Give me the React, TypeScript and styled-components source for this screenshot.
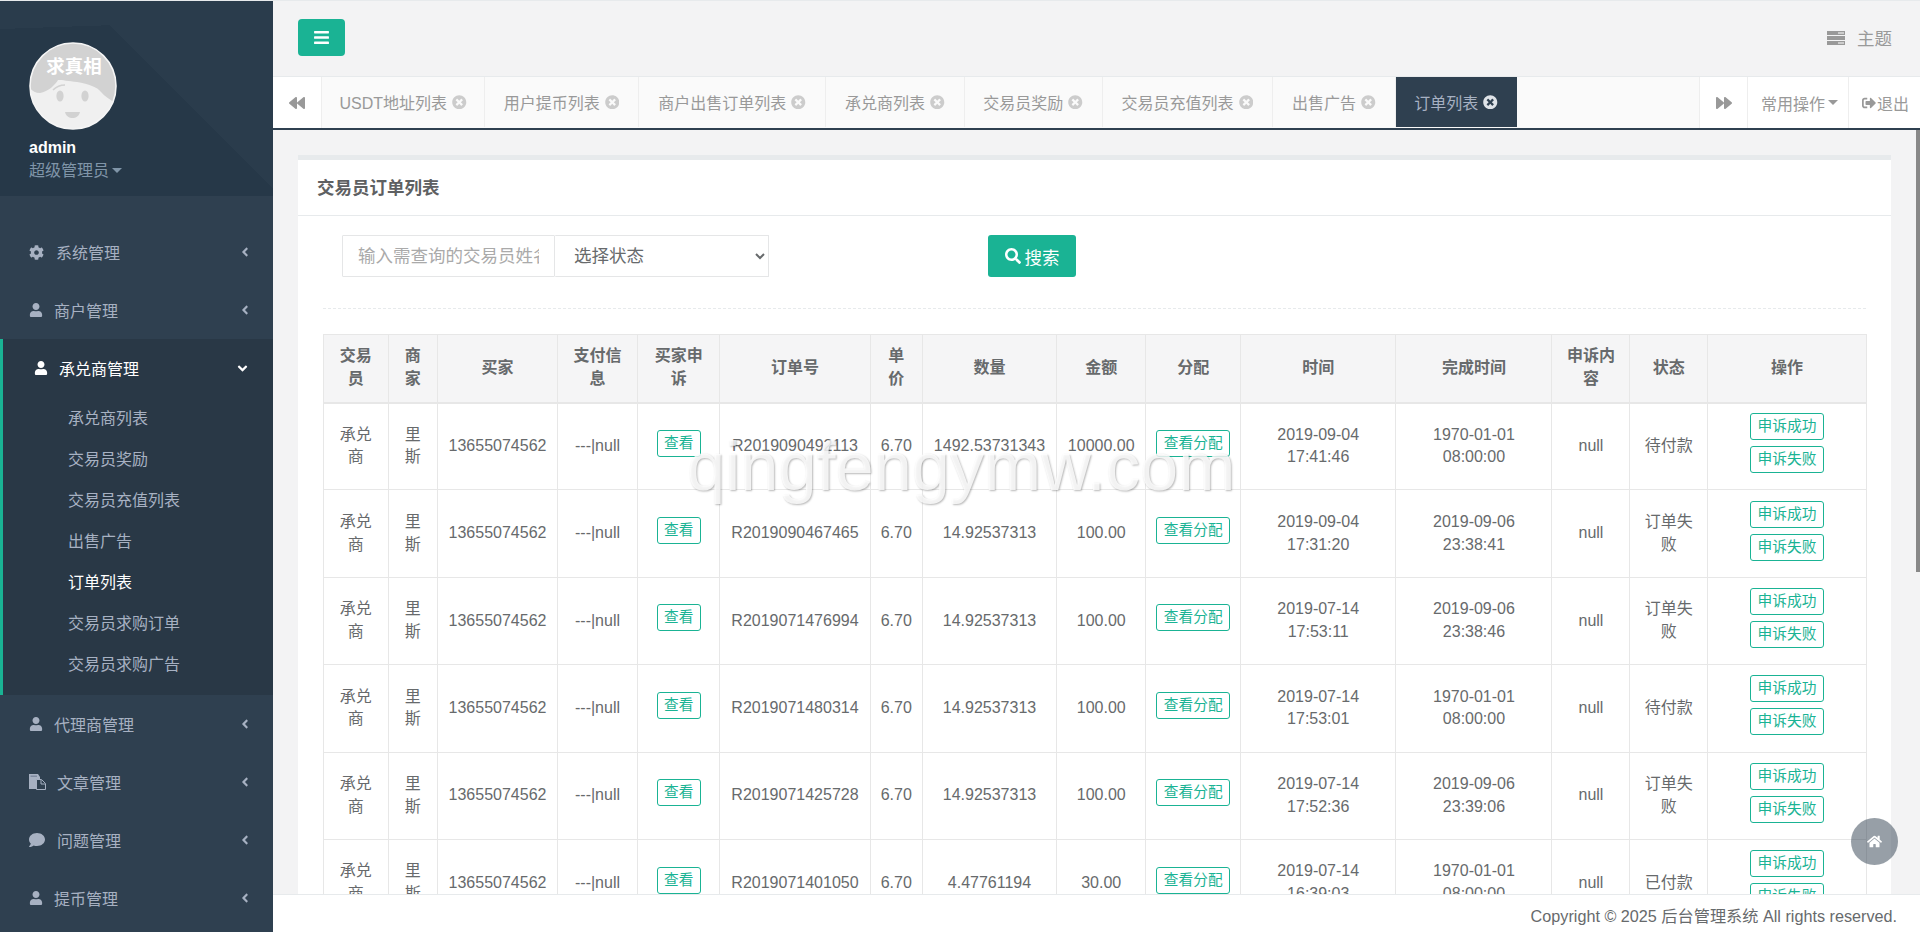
import React from "react";
import styled, { createGlobalStyle } from "styled-components";
import {
  FaAngleDown,
  FaAngleLeft,
  FaBackward,
  FaBars,
  FaCog,
  FaComment,
  FaForward,
  FaHome,
  FaSearch,
  FaSignOutAlt,
  FaTimesCircle,
  FaUser,
} from "react-icons/fa";

const FONT = `"Liberation Sans", "Noto Sans CJK SC", sans-serif`;

const GlobalStyle = createGlobalStyle`
  html, body {
    margin: 0;
    padding: 0;
    height: 100%;
    overflow: hidden;
    background: #f3f3f4;
    font-family: ${FONT};
    color: #676a6c;
  }
  * {
    box-sizing: border-box;
  }
`;

const Page = styled.div`
  position: relative;
  display: flex;
  width: 1920px;
  height: 932px;
  overflow: hidden;
  border-top: 1px solid #e7eaec;
`;

const Sidebar = styled.aside`
  width: 273px;
  flex-shrink: 0;
  background: #2f4050;
  overflow: hidden;
`;

const NavHeader = styled.div`
  height: 195px;
  padding: 41px 0 0 29px;
  background:
    linear-gradient(225deg, #2a3c4c 0, #2a3c4c 40%, transparent 40%),
    linear-gradient(178deg, #2a3c4c 0, #2a3c4c 28px, transparent 28px),
    #263848;
`;

const Avatar = styled.svg`
  display: block;
  width: 88px;
  height: 88px;
`;

const AdminName = styled.div`
  margin-top: 6px;
  font-size: 16px;
  line-height: 23px;
  font-weight: 700;
  color: #fff;
`;

const AdminRole = styled.div`
  display: flex;
  align-items: center;
  gap: 3px;
  font-size: 16px;
  line-height: 23px;
  color: #8095a8;
`;

const Caret = styled.span<{ $color: string }>`
  display: inline-block;
  width: 0;
  height: 0;
  border-left: 5px solid transparent;
  border-right: 5px solid transparent;
  border-top: 5px solid ${(p) => p.$color};
`;

const NavList = styled.nav`
  padding-top: 27px;
`;

const NavItem = styled.div`
  display: flex;
  align-items: center;
  height: 58px;
  padding: 0 21px 0 29px;
  font-size: 16px;
  color: #a7b1c2;
`;

const NavIcon = styled.span<{ $w: number }>`
  display: flex;
  align-items: center;
  width: ${(p) => p.$w}px;
  flex-shrink: 0;
`;

const NavLabel = styled.span`
  flex: 1;
`;

const ActiveGroup = styled.div`
  height: 356px;
  background: #293846;
  border-left: 3px solid #1ab394;
`;

const ActiveHead = styled(NavItem)`
  padding-left: 31px;
  padding-right: 23px;
  color: #fff;
`;

const SubList = styled.div`
  padding: 1px 0 0 65px;
`;

const SubItem = styled.div<{ $active?: boolean }>`
  height: 41px;
  line-height: 41px;
  font-size: 16px;
  color: ${(p) => (p.$active ? "#fff" : "#a7b1c2")};
`;

const Main = styled.main`
  display: flex;
  flex-direction: column;
  flex: 1;
  min-width: 0;
`;

const TopBar = styled.header`
  display: flex;
  align-items: center;
  justify-content: space-between;
  height: 75px;
  flex-shrink: 0;
  padding: 0 28px 2px 25px;
  background: #f3f3f4;
`;

const MenuButton = styled.button`
  display: flex;
  align-items: center;
  justify-content: center;
  width: 47px;
  height: 37px;
  padding: 0;
  border: none;
  border-radius: 4px;
  background: #1ab394;
  color: #fff;
  font-size: 17px;
`;

const ThemeLink = styled.div`
  display: flex;
  align-items: center;
  gap: 12px;
  font-size: 17.5px;
  color: #999;
`;

const TabRow = styled.div`
  display: flex;
  height: 54px;
  flex-shrink: 0;
  border-top: 1px solid #e7eaec;
  border-bottom: 2px solid #2f4050;
  background: #fafafa;
`;

const TabArrow = styled.div`
  display: flex;
  align-items: center;
  justify-content: center;
  width: 49px;
  flex-shrink: 0;
  background: #fff;
  color: #999;
  font-size: 16px;
`;

const LeftArrow = styled(TabArrow)`
  border-right: 1px solid #eee;
`;

const RightArrow = styled(TabArrow)`
  border-left: 1px solid #eee;
  border-right: 1px solid #eee;
`;

const Tabs = styled.div`
  display: flex;
  flex: 1;
  height: 50px;
`;

const Tab = styled.div<{ $active?: boolean; $w: number }>`
  display: flex;
  align-items: center;
  justify-content: center;
  gap: 5px;
  width: ${(p) => p.$w}px;
  font-size: 16px;
  white-space: nowrap;
  border-right: ${(p) => (p.$active ? "none" : "1px solid #eee")};
  background: ${(p) => (p.$active ? "#2f4050" : "transparent")};
  color: ${(p) => (p.$active ? "#a7b1c2" : "#999")};

  svg {
    font-size: 14.5px;
    color: ${(p) => (p.$active ? "#dfe3e8" : "#ccc")};
  }
`;

const TabAction = styled.div<{ $w: number }>`
  display: flex;
  align-items: center;
  gap: 3px;
  width: ${(p) => p.$w}px;
  flex-shrink: 0;
  padding-left: 13px;
  background: #fff;
  font-size: 16px;
  color: #999;
  white-space: nowrap;
`;

const ExitAction = styled(TabAction)`
  border-left: 1px solid #eee;
  gap: 1px;
`;

const Content = styled.div`
  flex: 1;
  min-height: 0;
  overflow: hidden;
  padding: 25px 29px 0 25px;
`;

const Panel = styled.section`
  background: #fff;
  border-top: 5px solid #e7eaec;
`;

const PanelTitle = styled.h5`
  display: flex;
  align-items: center;
  height: 56px;
  margin: 0;
  padding: 0 0 3px 19px;
  border-bottom: 1px solid #e7eaec;
  font-size: 17.5px;
  font-weight: 700;
  color: #5e6062;
`;

const PanelBody = styled.div`
  padding: 19px 25px 0;
`;

const SearchRow = styled.form`
  display: flex;
  align-items: stretch;
  height: 42px;
  padding-left: 19px;
`;

const SearchInput = styled.input`
  width: 213px;
  padding: 0 15px;
  border: 1px solid #e5e6e7;
  border-radius: 1px;
  background: #fff;
  font-family: ${FONT};
  font-size: 17.5px;
  outline: none;

  &::placeholder {
    color: #aaa;
  }
`;

const StateSelect = styled.select`
  width: 214px;
  padding: 0 15px;
  border: 1px solid #e5e6e7;
  border-left: none;
  border-radius: 1px;
  background: #fff;
  font-family: ${FONT};
  font-size: 17.5px;
  color: #676a6c;
  outline: none;
`;

const SearchButton = styled.button`
  display: flex;
  align-items: center;
  justify-content: center;
  gap: 4px;
  width: 88px;
  margin-left: 219px;
  padding: 0;
  border: none;
  border-radius: 3px;
  background: #1ab394;
  color: #fff;
  font-family: ${FONT};
  font-size: 17.5px;
`;

const Divider = styled.div`
  height: 1px;
  margin: 31px 0 25px;
  border-top: 1px dashed #e7eaec;
`;

const OrderTable = styled.table`
  width: 1543px;
  table-layout: fixed;
  border-collapse: collapse;
  font-size: 16px;
  line-height: 22.86px;
  text-align: center;
`;

const Col = styled.col<{ $w: number }>`
  width: ${(p) => p.$w}px;
`;

const Th = styled.th`
  height: 68px;
  padding: 8px 10px;
  background: #f5f5f6;
  border: 1px solid #e7e7e7;
  border-bottom: 2px solid #e7e7e7;
  font-weight: 700;
  vertical-align: middle;
`;

const Td = styled.td`
  height: 87.4px;
  padding: 8px 8px;
  border: 1px solid #e7e7e7;
  vertical-align: middle;
`;

const TextCell = styled(Td)`
  padding: 8px 10px;
`;

const OutlineButton = styled.button`
  display: block;
  width: fit-content;
  height: 27px;
  margin: 0 auto 6px;
  padding: 0 6.5px;
  border: 1px solid #1ab394;
  border-radius: 3px;
  background: #fff;
  color: #1ab394;
  font-family: ${FONT};
  font-size: 14.7px;
  line-height: 25px;
`;

const Footer = styled.footer`
  height: 38px;
  flex-shrink: 0;
  padding: 10px 23px 0 0;
  border-top: 1px solid #e7eaec;
  background: #fff;
  font-size: 16.2px;
  line-height: 23px;
  text-align: right;
`;

const Watermark = styled.div`
  position: absolute;
  left: 687px;
  top: 432px;
  font-size: 68.5px;
  line-height: 1;
  color: rgba(255, 255, 255, 0.82);
  text-shadow: 1px 1px 2px rgba(0, 0, 0, 0.28);
  white-space: nowrap;
  pointer-events: none;
`;

const ScrollThumb = styled.div`
  position: absolute;
  right: 0;
  top: 129px;
  width: 4px;
  height: 442px;
  background: #888;
`;

const HomeButton = styled.div`
  position: absolute;
  left: 1851px;
  top: 817px;
  display: flex;
  align-items: center;
  justify-content: center;
  width: 47px;
  height: 47px;
  border-radius: 50%;
  background: rgba(47, 64, 80, 0.5);
  color: #fff;
  font-size: 15px;
`;

const AvatarText = styled.text`
  font-family: ${FONT};
  font-size: 18.5px;
  font-weight: 700;
  fill: #fff;
`;

function AvatarArt() {
  return (
    <Avatar viewBox="0 0 88 88">
      <defs>
        <clipPath id="avatar-clip">
          <circle cx="44" cy="44" r="43" />
        </clipPath>
      </defs>
      <circle cx="44" cy="44" r="43" fill="#f0f0f0" />
      <g clipPath="url(#avatar-clip)">
        <path
          d="M0 0H88V62C82 58 76 55 72 50C68 45 60 42 48 40C40 39 33 38 29 38C27 42 19 50 11 51C6 51 3 48 0 46Z"
          fill="#d2d2d2"
        />
      </g>
      <ellipse cx="31" cy="54" rx="3.6" ry="5.6" fill="#d2d2d2" />
      <ellipse cx="56" cy="54" rx="3.6" ry="5.6" fill="#d2d2d2" />
      <path d="M24 48C27 45 31 43 36 43" fill="none" stroke="#d2d2d2" strokeWidth="1.6" />
      <path d="M36 70H51C50 74 47 76 43.5 76C40 76 37 74 36 70Z" fill="#d2d2d2" />
      <circle cx="44" cy="44" r="43" fill="none" stroke="#f5f5f5" strokeWidth="1.6" />
      <AvatarText x="45" y="31" textAnchor="middle">
        求真相
      </AvatarText>
    </Avatar>
  );
}

function FilesIcon() {
  return (
    <svg width="17" height="16" viewBox="0 0 17 16">
      <path d="M0 0H9L11 3V6H7V15H0Z" fill="#a7b1c2" />
      <path d="M1.5 1.5H8V3H1.5Z" fill="#7f8ba0" />
      <path d="M7.5 5.5H12.5L16.5 9.5V15.5H7.5Z" fill="#2f4050" stroke="#a7b1c2" />
      <path d="M12 6V10H16" fill="none" stroke="#a7b1c2" />
    </svg>
  );
}

function ThemeIcon() {
  return (
    <svg width="18" height="14" viewBox="0 0 18 14">
      <rect y="0" width="18" height="4" fill="#999" />
      <rect y="5" width="18" height="4" fill="#999" />
      <rect y="10" width="18" height="4" fill="#999" />
      <rect x="11" y="1.5" width="6" height="1" fill="#fff" />
      <rect x="11" y="11.5" width="6" height="1" fill="#fff" />
    </svg>
  );
}

const navBefore = [
  { label: "系统管理", icon: <FaCog size={15} />, w: 27 },
  { label: "商户管理", icon: <FaUser size={14} />, w: 25 },
];

const navAfter = [
  { label: "代理商管理", icon: <FaUser size={14} />, w: 25 },
  { label: "文章管理", icon: <FilesIcon />, w: 28 },
  { label: "问题管理", icon: <FaComment size={16} />, w: 28 },
  { label: "提币管理", icon: <FaUser size={14} />, w: 25 },
];

const subItems = ["承兑商列表", "交易员奖励", "交易员充值列表", "出售广告", "订单列表", "交易员求购订单", "交易员求购广告"];

const tabs = [
  { label: "USDT地址列表", w: 163 },
  { label: "用户提币列表", w: 154 },
  { label: "商户出售订单列表", w: 187 },
  { label: "承兑商列表", w: 138.5 },
  { label: "交易员奖励", w: 138 },
  { label: "交易员充值列表", w: 170.5 },
  { label: "出售广告", w: 122.5 },
];

const columns = [
  { title: "交易员", w: 64.5 },
  { title: "商家", w: 49.5 },
  { title: "买家", w: 120 },
  { title: "支付信息", w: 80 },
  { title: "买家申诉", w: 82.4 },
  { title: "订单号", w: 150.2 },
  { title: "单价", w: 52.4 },
  { title: "数量", w: 134 },
  { title: "金额", w: 89.5 },
  { title: "分配", w: 94.5 },
  { title: "时间", w: 155.5 },
  { title: "完成时间", w: 156 },
  { title: "申诉内容", w: 78 },
  { title: "状态", w: 77.5 },
  { title: "操作", w: 159 },
];

const orders = [
  { no: "R2019090492113", qty: "1492.53731343", amount: "10000.00", date: "2019-09-04", time: "17:41:46", doneDate: "1970-01-01", doneTime: "08:00:00", state: "待付款" },
  { no: "R2019090467465", qty: "14.92537313", amount: "100.00", date: "2019-09-04", time: "17:31:20", doneDate: "2019-09-06", doneTime: "23:38:41", state: "订单失败" },
  { no: "R2019071476994", qty: "14.92537313", amount: "100.00", date: "2019-07-14", time: "17:53:11", doneDate: "2019-09-06", doneTime: "23:38:46", state: "订单失败" },
  { no: "R2019071480314", qty: "14.92537313", amount: "100.00", date: "2019-07-14", time: "17:53:01", doneDate: "1970-01-01", doneTime: "08:00:00", state: "待付款" },
  { no: "R2019071425728", qty: "14.92537313", amount: "100.00", date: "2019-07-14", time: "17:52:36", doneDate: "2019-09-06", doneTime: "23:39:06", state: "订单失败" },
  { no: "R2019071401050", qty: "4.47761194", amount: "30.00", date: "2019-07-14", time: "16:39:03", doneDate: "1970-01-01", doneTime: "08:00:00", state: "已付款" },
];

export default function App() {
  return (
    <Page>
      <GlobalStyle />
      <Sidebar>
        <NavHeader>
          <AvatarArt />
          <AdminName>admin</AdminName>
          <AdminRole>
            超级管理员 <Caret $color="#8095a8" />
          </AdminRole>
        </NavHeader>
        <NavList>
          {navBefore.map((item) => (
            <NavItem key={item.label}>
              <NavIcon $w={item.w}>{item.icon}</NavIcon>
              <NavLabel>{item.label}</NavLabel>
              <FaAngleLeft size={14} />
            </NavItem>
          ))}
          <ActiveGroup>
            <ActiveHead>
              <NavIcon $w={25}>
                <FaUser size={14} />
              </NavIcon>
              <NavLabel>承兑商管理</NavLabel>
              <FaAngleDown size={15} />
            </ActiveHead>
            <SubList>
              {subItems.map((label) => (
                <SubItem key={label} $active={label === "订单列表"}>
                  {label}
                </SubItem>
              ))}
            </SubList>
          </ActiveGroup>
          {navAfter.map((item) => (
            <NavItem key={item.label}>
              <NavIcon $w={item.w}>{item.icon}</NavIcon>
              <NavLabel>{item.label}</NavLabel>
              <FaAngleLeft size={14} />
            </NavItem>
          ))}
        </NavList>
      </Sidebar>
      <Main>
        <TopBar>
          <MenuButton type="button">
            <FaBars />
          </MenuButton>
          <ThemeLink>
            <ThemeIcon />
            主题
          </ThemeLink>
        </TopBar>
        <TabRow>
          <LeftArrow>
            <FaBackward />
          </LeftArrow>
          <Tabs>
            {tabs.map((t) => (
              <Tab key={t.label} $w={t.w}>
                {t.label}
                <FaTimesCircle />
              </Tab>
            ))}
            <Tab $active $w={121}>
              订单列表
              <FaTimesCircle />
            </Tab>
          </Tabs>
          <RightArrow>
            <FaForward />
          </RightArrow>
          <TabAction $w={100}>
            常用操作 <Caret $color="#999" />
          </TabAction>
          <ExitAction $w={72}>
            <FaSignOutAlt size={14} />
            退出
          </ExitAction>
        </TabRow>
        <Content>
          <Panel>
            <PanelTitle>交易员订单列表</PanelTitle>
            <PanelBody>
              <SearchRow>
                <SearchInput placeholder="输入需查询的交易员姓名" />
                <StateSelect defaultValue="">
                  <option value="">选择状态</option>
                </StateSelect>
                <SearchButton type="button">
                  <FaSearch size={16} />
                  搜索
                </SearchButton>
              </SearchRow>
              <Divider />
              <OrderTable>
                <colgroup>
                  {columns.map((c) => (
                    <Col key={c.title} $w={c.w} />
                  ))}
                </colgroup>
                <thead>
                  <tr>
                    {columns.map((c) => (
                      <Th key={c.title}>{c.title}</Th>
                    ))}
                  </tr>
                </thead>
                <tbody>
                  {orders.map((o) => (
                    <tr key={o.no}>
                      <TextCell>承兑商</TextCell>
                      <TextCell>里斯</TextCell>
                      <TextCell>13655074562</TextCell>
                      <TextCell>---|null</TextCell>
                      <Td>
                        <OutlineButton type="button">查看</OutlineButton>
                      </Td>
                      <TextCell>{o.no}</TextCell>
                      <TextCell>6.70</TextCell>
                      <TextCell>{o.qty}</TextCell>
                      <TextCell>{o.amount}</TextCell>
                      <Td>
                        <OutlineButton type="button">查看分配</OutlineButton>
                      </Td>
                      <TextCell>
                        {o.date}
                        <br />
                        {o.time}
                      </TextCell>
                      <TextCell>
                        {o.doneDate}
                        <br />
                        {o.doneTime}
                      </TextCell>
                      <TextCell>null</TextCell>
                      <TextCell>{o.state}</TextCell>
                      <Td>
                        <OutlineButton type="button">申诉成功</OutlineButton>
                        <OutlineButton type="button">申诉失败</OutlineButton>
                      </Td>
                    </tr>
                  ))}
                </tbody>
              </OrderTable>
            </PanelBody>
          </Panel>
        </Content>
        <Footer>Copyright © 2025 后台管理系统 All rights reserved.</Footer>
      </Main>
      <Watermark>qingfengymw.com</Watermark>
      <ScrollThumb />
      <HomeButton>
        <FaHome />
      </HomeButton>
    </Page>
  );
}
